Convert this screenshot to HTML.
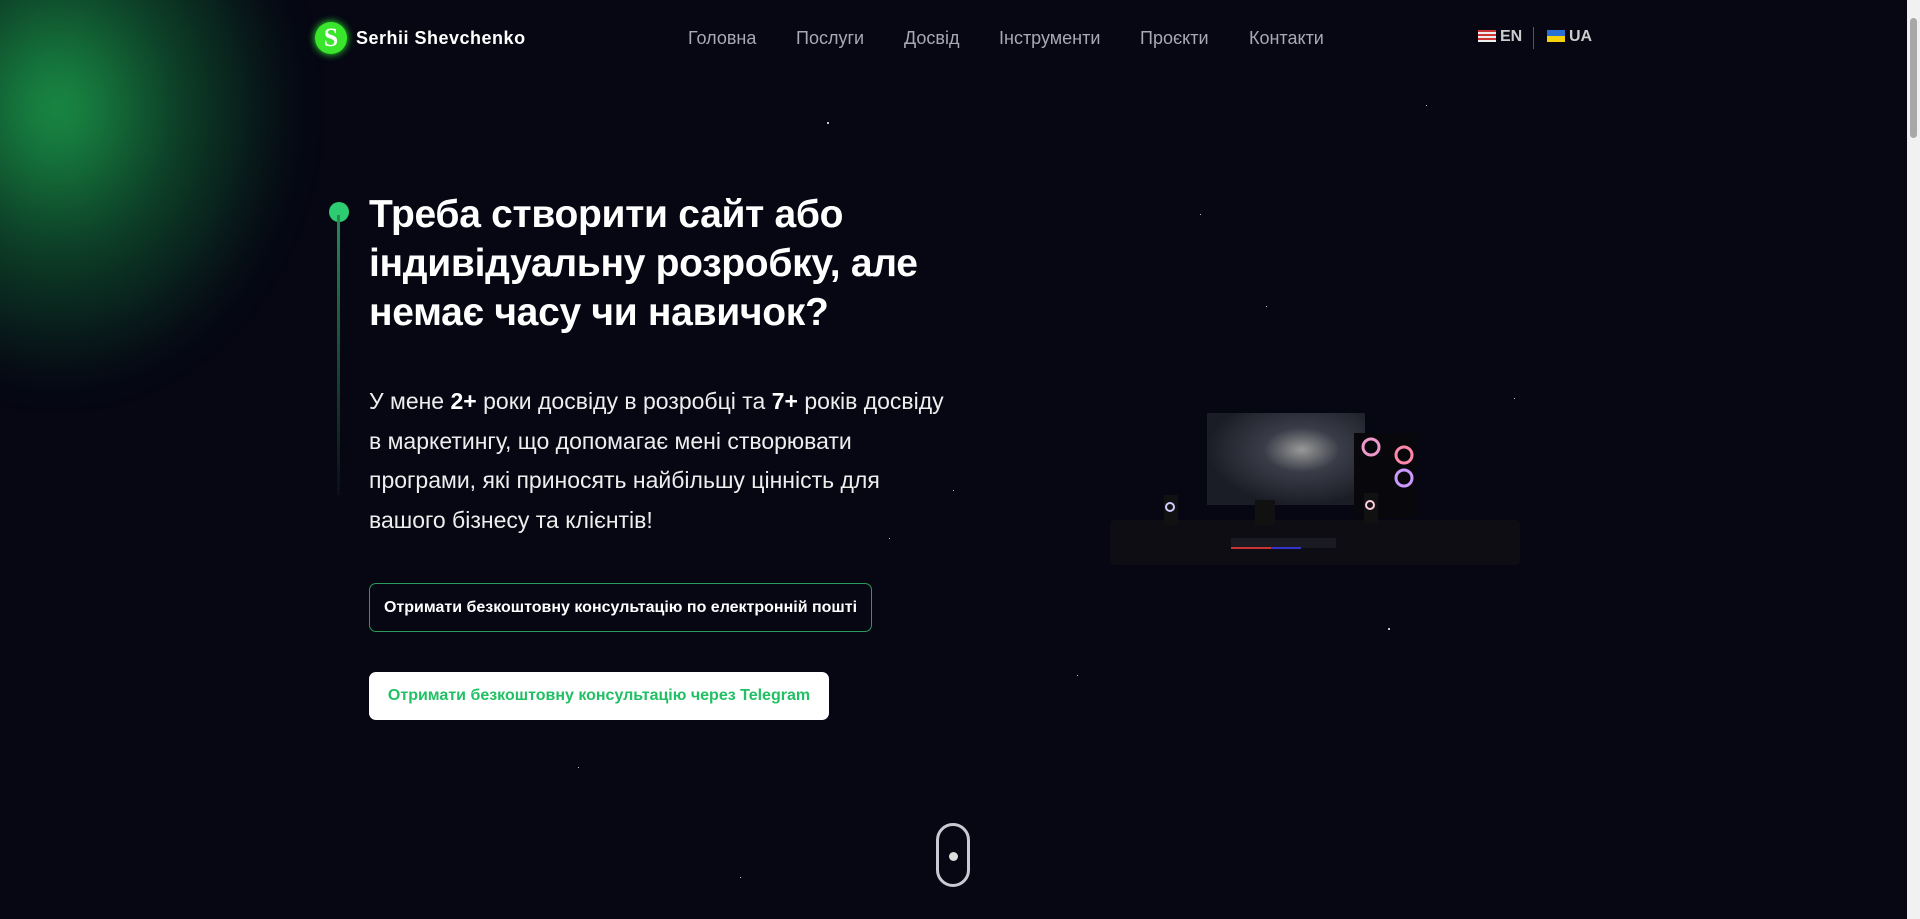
<!DOCTYPE html>
<html><head><meta charset="utf-8"><style>
*{margin:0;padding:0;box-sizing:border-box}
html,body{width:1920px;height:919px;overflow:hidden;background:#060713;font-family:"Liberation Sans",sans-serif;color:#fff}
.glow{position:absolute;left:-140px;top:-80px;width:440px;height:470px;background:radial-gradient(ellipse at 45% 40%,rgba(30,170,80,.85) 0%,rgba(20,120,60,.5) 35%,rgba(6,7,19,0) 70%);filter:blur(20px)}
.logo{position:absolute;left:315px;top:22px;width:32px;height:32px;border-radius:50%;background:#39e62b;box-shadow:0 0 8px #3f3;color:#fff;font:bold 26px "Liberation Serif",serif;text-align:center;line-height:32px}
.name{position:absolute;left:356px;top:28px;font-weight:bold;font-size:18px;letter-spacing:.5px}
.nav a{position:absolute;top:28px;font-size:18px;color:#a8a9b4;text-decoration:none}
.lang{position:absolute;top:28px;font-weight:bold;font-size:16px;color:#ccc}
.flag{display:inline-block;width:18px;height:12px;vertical-align:-1px;margin-right:4px}
h1{position:absolute;left:369px;top:190px;font-size:39px;line-height:49px;font-weight:bold;width:640px;letter-spacing:-.3px}
p{position:absolute;left:369px;top:382px;font-size:23px;line-height:39.5px;color:#eee;white-space:nowrap}
p b{font-weight:bold;color:#fff}
.b1{position:absolute;left:369px;top:583px;width:503px;height:49px;border:1px solid #2a9a5a;border-radius:7px;font-weight:bold;font-size:16px;line-height:47px;text-align:center}
.b2{position:absolute;left:369px;top:672px;width:460px;height:48px;background:#fff;border-radius:7px;font-weight:bold;font-size:16px;line-height:48px;text-align:center;color:#22c064}
.dot{position:absolute;left:329px;top:202px;width:20px;height:20px;border-radius:50%;background:#2ecc71}
.line{position:absolute;left:337px;top:215px;width:3px;height:280px;background:linear-gradient(#2a8a55,rgba(40,80,60,.1))}
.mouse{position:absolute;left:936px;top:823px;width:34px;height:64px;border:3px solid #c9c9d2;border-radius:17px}
.mouse i{position:absolute;left:10px;top:26px;width:9px;height:9px;border-radius:50%;background:#ddd}
.star{position:absolute;width:2px;height:2px;background:#fff;border-radius:50%}
.sb{position:absolute;right:0;top:0;width:13px;height:919px;background:#f1f1f1}
.sb i{position:absolute;left:3px;top:18px;width:7px;height:120px;background:#a8a8a8;border-radius:4px}
</style></head><body>
<div class="glow"></div>
<div class="logo">S</div><div class="name">Serhii Shevchenko</div>
<div class="nav"><a style="left:688px">Головна</a><a style="left:796px">Послуги</a><a style="left:904px">Досвід</a><a style="left:999px">Інструменти</a><a style="left:1140px">Проєкти</a><a style="left:1249px">Контакти</a></div>
<div class="lang" style="left:1478px"><span class="flag" style="background:repeating-linear-gradient(#c33 0 2px,#eee 2px 4px)"></span>EN</div>
<div style="position:absolute;left:1533px;top:27px;width:1px;height:22px;background:#555"></div>
<div class="lang" style="left:1547px"><span class="flag" style="background:linear-gradient(#2a6fd6 50%,#f5d10a 50%)"></span>UA</div>
<div class="dot"></div><div class="line"></div>
<h1>Треба створити сайт або<br>індивідуальну розробку, але<br>немає часу чи навичок?</h1>
<p>У мене <b>2+</b> роки досвіду в розробці та <b>7+</b> років досвіду<br>в маркетингу, що допомагає мені створювати<br>програми, які приносять найбільшу цінність для<br>вашого бізнесу та клієнтів!</p>
<div class="b1">Отримати безкоштовну консультацію по електронній пошті</div>
<div class="b2">Отримати безкоштовну консультацію через Telegram</div>
<svg style="position:absolute;left:1100px;top:400px" width="430" height="180">
<defs><radialGradient id="sc" cx="60%" cy="40%" r="60%"><stop offset="0" stop-color="#999"/><stop offset=".4" stop-color="#3a3d48"/><stop offset="1" stop-color="#1b1d26"/></radialGradient></defs>
<rect x="10" y="120" width="410" height="45" rx="4" fill="#0e0e14" opacity=".9"/>
<rect x="107" y="13" width="158" height="92" fill="url(#sc)"/>
<rect x="155" y="100" width="20" height="25" fill="#111"/>
<rect x="131" y="138" width="105" height="10" fill="#1a1a22"/>
<rect x="131" y="147" width="40" height="2" fill="#c33"/><rect x="171" y="147" width="30" height="2" fill="#33c"/>
<rect x="254" y="33" width="63" height="85" fill="#08080c"/>
<circle cx="271" cy="47" r="8" fill="none" stroke="#e9c" stroke-width="3"/>
<circle cx="304" cy="55" r="8" fill="none" stroke="#f8a" stroke-width="3"/>
<circle cx="304" cy="78" r="8" fill="none" stroke="#c9f" stroke-width="3"/>
<rect x="64" y="95" width="14" height="30" fill="#111"/><circle cx="70" cy="107" r="4" fill="none" stroke="#ccf" stroke-width="2"/>
<rect x="264" y="93" width="14" height="30" fill="#111"/><circle cx="270" cy="105" r="4" fill="none" stroke="#fcd" stroke-width="2"/>
</svg>
<div class="mouse"><i></i></div>
<div class="star" style="left:827px;top:122px"></div><div class="star" style="left:1426px;top:105px;width:1px;height:1px"></div>
<div class="star" style="left:1200px;top:214px;width:1px;height:1px"></div><div class="star" style="left:1266px;top:306px;width:1px;height:1px"></div>
<div class="star" style="left:1514px;top:398px;width:1px;height:1px"></div><div class="star" style="left:953px;top:490px;width:1px;height:1px"></div>
<div class="star" style="left:889px;top:538px;width:1px;height:1px"></div><div class="star" style="left:1388px;top:628px"></div>
<div class="star" style="left:1077px;top:675px;width:1px;height:1px"></div><div class="star" style="left:578px;top:767px;width:1px;height:1px"></div>
<div class="star" style="left:740px;top:877px;width:1px;height:1px"></div>
<div class="sb"><i></i></div>
</body></html>
